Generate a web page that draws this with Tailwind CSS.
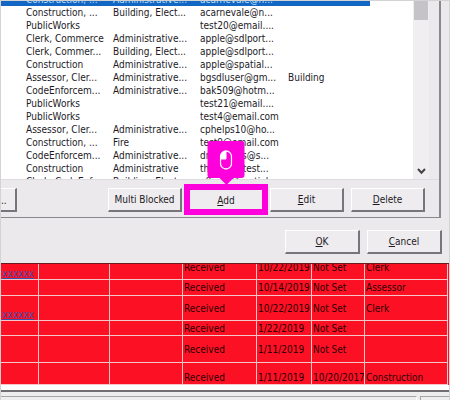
<!DOCTYPE html>
<html lang="en">
<head>
<meta charset="utf-8">
<meta name="viewport" content="width=device-width, initial-scale=1">
<title>Users</title>
<script src="https://cdn.jsdelivr.net/npm/@tailwindcss/browser@4"></script>
</head>
<body class="min-h-screen overflow-hidden bg-[#ece9ed] font-['DejaVu_Sans_Condensed','DejaVu_Sans',sans-serif] text-[10px] leading-[13px] text-[#1c1a1f]">
<main class="flex min-h-screen flex-col border-x border-t border-[#d3d3d3]">

  <section class="mr-2 border-r-2 border-b border-[#8a888c]">
    <div class="flex h-[179px] overflow-hidden border-b border-[#dedbe0] bg-white">
      <div class="min-w-0 flex-1 overflow-hidden">
        <table class="-mt-2 w-full table-fixed border-collapse whitespace-nowrap">
          <colgroup><col class="w-[112px]"><col class="w-[87px]"><col class="w-[88px]"><col></colgroup>
          <tbody>
            <tr class="h-[13px] text-[#b9dcf5]">
              <td class="bg-[#1266c4] pl-[25px]">Construction, ...</td><td class="bg-[#1266c4]">Administrative...</td><td class="bg-[#1266c4]">acarnevale@n...</td>
              <td><div class="mr-[43px] h-[13px] bg-[#1266c4]"></div></td>
            </tr>
            <tr class="h-[13px]"><td class="pl-[25px]">Construction, ...</td><td>Building, Elect...</td><td>acarnevale@n...</td><td></td></tr>
            <tr class="h-[13px]"><td class="pl-[25px]">PublicWorks</td><td></td><td>test20@email....</td><td></td></tr>
            <tr class="h-[13px]"><td class="pl-[25px]">Clerk, Commerce</td><td>Administrative...</td><td>apple@sdlport...</td><td></td></tr>
            <tr class="h-[13px]"><td class="pl-[25px]">Clerk, Commer...</td><td>Building, Elect...</td><td>apple@sdlport...</td><td></td></tr>
            <tr class="h-[13px]"><td class="pl-[25px]">Construction</td><td>Administrative...</td><td>apple@spatial...</td><td></td></tr>
            <tr class="h-[13px]"><td class="pl-[25px]">Assessor, Cler...</td><td>Administrative...</td><td>bgsdluser@gm...</td><td>Building</td></tr>
            <tr class="h-[13px]"><td class="pl-[25px]">CodeEnforcem...</td><td>Administrative...</td><td>bak509@hotm...</td><td></td></tr>
            <tr class="h-[13px]"><td class="pl-[25px]">PublicWorks</td><td></td><td>test21@email....</td><td></td></tr>
            <tr class="h-[13px]"><td class="pl-[25px]">PublicWorks</td><td></td><td>test4@email.com</td><td></td></tr>
            <tr class="h-[13px]"><td class="pl-[25px]">Assessor, Cler...</td><td>Administrative...</td><td>cphelps10@ho...</td><td></td></tr>
            <tr class="h-[13px]"><td class="pl-[25px]">Construction, ...</td><td>Fire</td><td>test9@email.com</td><td></td></tr>
            <tr class="h-[13px]"><td class="pl-[25px]">CodeEnforcem...</td><td>Administrative...</td><td>dmathews@s...</td><td></td></tr>
            <tr class="h-[13px]"><td class="pl-[25px]">Construction</td><td>Administrative</td><td>thomas@test...</td><td></td></tr>
            <tr class="h-[13px]"><td class="pl-[25px]">Clerk, CodeEnf...</td><td>Building, Elect...</td><td>aflores@partial...</td><td></td></tr>
          </tbody>
        </table>
      </div>
      <div class="flex w-4 flex-col items-center justify-between bg-[#f0eef1]">
        <div class="h-[19px] w-[14px] bg-[#c5c3c8]"></div>
        <svg class="mb-1 h-[7px] w-[9px]" viewBox="0 0 9 7" fill="none" stroke="#444" stroke-width="2"><path d="M1 1l3.500 3.800L8 1"/></svg>
      </div>
      <div class="w-[10px] bg-[#ece9ed]"></div>
    </div>
    <div class="flex pt-2 pr-[14px] pb-[5px]">
      <button class="h-6 w-4 border-t border-r-2 border-b-2 border-t-white border-r-[#77757a] border-b-[#77757a] bg-[#efecef] pt-[2px] text-left">..</button>
      <div class="flex-1"></div>
      <div class="flex gap-[7px]">
        <button class="h-6 w-[74px] border-t border-r-2 border-b-2 border-l border-t-white border-r-[#77757a] border-b-[#77757a] border-l-white bg-[#efecef]">Multi Blocked</button>
        <div class="relative w-[74px]">
          <button class="h-6 w-full bg-[#efecef]"><u>A</u>dd</button>
          <div class="absolute -inset-x-[5px] -top-[4px] -bottom-[3px] border-6 border-[#ff00dc]"></div>
          <div class="absolute bottom-[34px] left-1/2 flex size-[37px] -translate-x-1/2 items-center justify-center rounded-[3px] bg-[#ff00dc]">
            <svg class="h-[20px] w-[13px]" viewBox="0 0 13 20"><path d="M6.500 1v8H1V6.500A5.500 5.500 0 0 1 6.500 1z" fill="#fff"/><rect x="1" y="1" width="11" height="18" rx="5.500" fill="none" stroke="#fff" stroke-width="1.300"/><path d="M1 9h5.500V1" fill="none" stroke="#fff"/></svg>
            <svg class="absolute top-full left-1/2 h-[7px] w-[14px] -translate-x-1/2" viewBox="0 0 14 7"><path d="M0 0h14L7 7z" fill="#ff00dc"/></svg>
          </div>
        </div>
        <button class="h-6 w-[74px] border-t border-r-2 border-b-2 border-l border-t-white border-r-[#77757a] border-b-[#77757a] border-l-white bg-[#efecef]"><u>E</u>dit</button>
        <button class="h-6 w-[74px] border-t border-r-2 border-b-2 border-l border-t-white border-r-[#77757a] border-b-[#77757a] border-l-white bg-[#efecef]"><u>D</u>elete</button>
      </div>
    </div>
  </section>

  <div class="flex justify-end gap-[7px] pt-3 pr-[7px] pb-[9px]">
    <button class="h-6 w-[75px] border-t border-r-2 border-b-2 border-l border-t-white border-r-[#77757a] border-b-[#77757a] border-l-white bg-[#efecef]"><u>O</u>K</button>
    <button class="h-6 w-[75px] border-t border-r-2 border-b-2 border-l border-t-white border-r-[#77757a] border-b-[#77757a] border-l-white bg-[#efecef]"><u>C</u>ancel</button>
  </div>

  <section class="overflow-hidden border-t border-[#6b1a22] bg-[#fb1123]">
    <table class="-mt-[9px] w-full table-fixed border-separate border-spacing-0 whitespace-nowrap text-[#2e0006] [&_td]:overflow-hidden [&_td]:border-r [&_td]:border-b [&_td]:border-[#f5c6c6] [&_td]:p-0 [&_td]:pl-px [&_a]:block [&_a]:h-[9px] [&_a]:leading-[8px] [&_a]:text-[#3b4fb0] [&_a]:underline">
      <colgroup><col class="w-[38px]"><col class="w-[71px]"><col class="w-[73px]"><col class="w-[74px]"><col class="w-[55px]"><col class="w-[53px]"><col><col class="w-[1px]"></colgroup>
      <tbody>
        <tr class="h-[25px]"><td class="align-bottom"><a href="#">xxxxxx</a></td><td></td><td></td><td>Received</td><td>10/22/2019</td><td>Not Set</td><td>Clerk</td></tr>
        <tr class="h-[16px]"><td></td><td></td><td></td><td>Received</td><td>10/14/2019</td><td>Not Set</td><td>Assessor</td></tr>
        <tr class="h-[25px]"><td class="align-bottom"><a href="#">xxxxxx</a></td><td></td><td></td><td>Received</td><td>10/22/2019</td><td>Not Set</td><td>Clerk</td></tr>
        <tr class="h-[15px]"><td></td><td></td><td></td><td>Received</td><td>1/22/2019</td><td>Not Set</td><td></td></tr>
        <tr class="h-[27px]"><td></td><td></td><td></td><td>Received</td><td>1/11/2019</td><td>Not Set</td><td></td></tr>
        <tr class="h-[22px] align-bottom"><td></td><td></td><td></td><td>Received</td><td>1/11/2019</td><td>10/20/2017</td><td>Construction</td></tr>
      </tbody>
    </table>
  </section>

  <footer class="flex flex-1 flex-col bg-[#eeedee]">
    <div class="h-[5px] bg-white"></div>
    <div class="h-[2px] bg-[#6f6e70]"></div>
    <div class="mt-1 flex flex-1 gap-[3px]">
      <div class="flex-1 border-t border-r border-t-[#a5a4a6] border-r-white"></div>
      <div class="w-[29px] border-t border-l border-[#a5a4a6]"></div>
    </div>
  </footer>
</main>
</body>
</html>
